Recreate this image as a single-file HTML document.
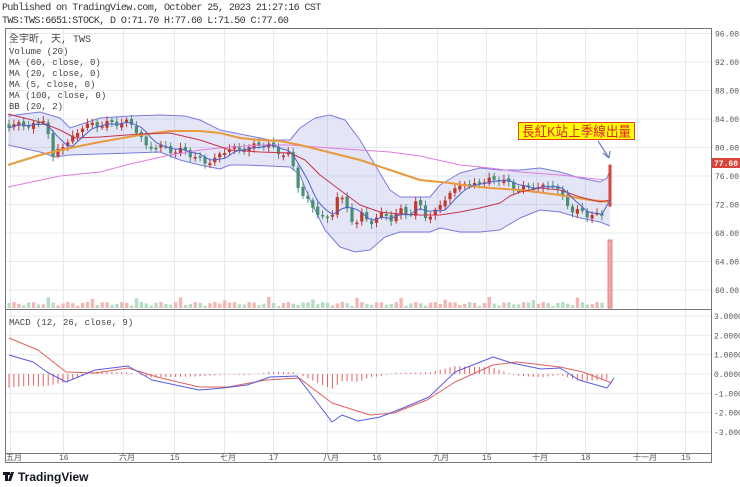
<!DOCTYPE html>
<html><head><meta charset="utf-8"><style>
body{margin:0;background:#fff;width:740px;height:487px;overflow:hidden;font-family:"Liberation Mono","Noto Sans CJK TC",monospace;}
#hdr{position:absolute;left:2px;top:2px;font-size:10px;line-height:13px;color:#333;font-family:"Liberation Mono","Noto Sans CJK SC",monospace;letter-spacing:-0.6px;}
svg{position:absolute;left:0;top:0;}
</style></head><body>
<div id="hdr">Published on TradingView.com, October 25, 2023 21:27:16 CST<br>TWS:TWS:6651:STOCK, D O:71.70 H:77.60 L:71.50 C:77.60</div>
<svg id="s" width="740" height="487" xmlns="http://www.w3.org/2000/svg" font-family="Liberation Mono, Noto Sans CJK TC, monospace">
<g id="grid" stroke="#e6eaee" stroke-width="1"></g>
<g id="g"></g>
<rect x="5.5" y="28.5" width="706" height="434" fill="none" stroke="#777"/>
<line x1="5" y1="309.5" x2="712" y2="309.5" stroke="#777"/>
<line x1="5" y1="453.5" x2="712" y2="453.5" stroke="#777"/>
<line x1="711.5" y1="28" x2="711.5" y2="463" stroke="#777"/>
<g font-size="9" fill="#444">
<text x="9" y="42" font-size="10">全宇昕, 天, TWS</text>
<text x="9" y="54">Volume (20)</text>
<text x="9" y="65">MA (60, close, 0)</text>
<text x="9" y="76">MA (20, close, 0)</text>
<text x="9" y="87">MA (5, close, 0)</text>
<text x="9" y="98">MA (100, close, 0)</text>
<text x="9" y="109">BB (20, 2)</text>
<text x="9" y="325">MACD (12, 26, close, 9)</text>
</g>
<g id="ax" font-size="8" fill="#555"></g>
<rect x="712" y="158" width="28" height="10" fill="#d9433a"/>
<text x="714" y="166" font-size="8" fill="#fff" font-weight="bold">77.60</text>
<rect x="518.5" y="122.5" width="116" height="17" fill="#ffff00" stroke="#e0402a"/>
<text x="522" y="136.5" font-size="14" fill="#e0202a" textLength="109" lengthAdjust="spacingAndGlyphs" font-family="Liberation Sans, Noto Sans CJK TC, sans-serif">長紅K站上季線出量</text>
<path d="M598 141 L609 158 M609 158 L603 153 M609 158 L610 151" stroke="#6a7fb8" stroke-width="1.2" fill="none"/>
<g transform="translate(3,470)">
<path d="M0 2h7v3h-2v6h-3v-6h-2z" fill="#131722"/><path d="M8 2h3l-3 9h-3l2-6z" fill="#131722"/>
<text x="15" y="11" font-size="12" font-weight="bold" fill="#131722" font-family="Liberation Sans, sans-serif">TradingView</text>
</g>
</svg>
<script>
var NS="http://www.w3.org/2000/svg",G=document.getElementById('g'),GR=document.getElementById('grid'),AX=document.getElementById('ax');
function el(p,t,a){var e=document.createElementNS(NS,t);for(var k in a)e.setAttribute(k,a[k]);p.appendChild(e);return e;}
function interp(pts,x){if(x<=pts[0][0])return pts[0][1];for(var i=1;i<pts.length;i++){if(x<=pts[i][0]){var a=pts[i-1],b=pts[i];return a[1]+(b[1]-a[1])*(x-a[0])/(b[0]-a[0]);}}return pts[pts.length-1][1];}
function pl(pts,c,w,f){var d=pts.map(function(p,i){return (i?'L':'M')+p[0]+' '+p[1];}).join('');return el(G,'path',{d:d,stroke:c,'stroke-width':w||1,fill:f||'none','stroke-linejoin':'round'});}
function Y(p){return 119-(p-84)*7.125;}
var tx=[[10,'五月'],[63,'16'],[123,'六月'],[174,'15'],[224,'七月'],[273,'17'],[327,'八月'],[376,'16'],[437,'九月'],[486,'15'],[536,'十月'],[585,'18'],[637,'十一月'],[685,'15']];
tx.forEach(function(t){el(GR,'line',{x1:t[0]+.5,y1:29,x2:t[0]+.5,y2:453});var e=el(AX,'text',{x:t[0]-4,y:460});e.textContent=t[1];});
for(var p=60;p<=96;p+=4){var y=Y(p);el(GR,'line',{x1:6,y1:y,x2:711,y2:y});var e=el(AX,'text',{x:715,y:y+3});e.textContent=p.toFixed(2);}
[3,2,1,0,-1,-2,-3].forEach(function(m){var y=374-19.3*m;el(GR,'line',{x1:6,y1:y,x2:711,y2:y});var e=el(AX,'text',{x:714,y:y+3});e.textContent=(m<0?'':' ')+m.toFixed(4);});
var up=[[8,116],[40,112],[60,118],[70,128],[100,118],[130,116],[160,115],[185,116],[200,120],[220,130],[235,133],[270,140],[290,140],[300,128],[315,118],[330,115],[345,120],[360,140],[375,165],[390,190],[400,197],[430,197],[440,185],[460,173],[480,168],[500,170],[520,170],[540,168],[560,172],[580,178],[600,182],[607,178],[610,170]];
var lo=[[8,145],[40,152],[55,157],[70,155],[100,154],[130,153],[160,152],[180,160],[200,165],[220,169],[230,165],[245,165],[270,166],[290,167],[300,175],[310,200],[325,230],[340,247],[355,252],[370,250],[385,237],[400,232],[430,232],[440,228],[460,232],[480,232],[500,230],[520,218],[540,210],[560,212],[580,218],[600,222],[610,226]];
pl(up.concat(lo.slice().reverse()).concat([up[0]]),'none',0,'rgba(120,130,220,0.2)');
pl(up,'#7b7be0',1);pl(lo,'#7b7be0',1);
var cl=[[8,125],[40,125],[45,115],[53,160],[60,145],[70,142],[82,126],[90,125],[100,125],[110,123],[125,123],[130,122],[140,135],[145,148],[155,146],[165,148],[175,152],[185,150],[195,158],[205,162],[215,160],[225,150],[230,148],[240,150],[255,146],[265,143],[275,150],[285,155],[290,155],[300,192],[306,200],[312,206],[320,215],[330,222],[337,195],[342,200],[350,215],[355,225],[362,215],[370,222],[378,218],[385,212],[390,220],[398,215],[402,208],[410,215],[418,200],[425,215],[432,218],[438,208],[442,200],[450,195],[455,190],[462,180],[470,188],[478,180],[485,183],[490,180],[497,178],[505,182],[510,185],[515,188],[520,190],[525,187],[540,187],[545,188],[550,185],[555,182],[560,197],[565,200],[570,208],[575,213],[580,210],[585,215],[590,214],[595,215],[600,218],[605,212]];
var prev=125,i=0,cs=[];
for(var x=9;x<=606;x+=4.9){i++;var c=interp(cl,x)+Math.sin(i*1.7)*3;var o=prev+Math.cos(i*2.1)*1.5;prev=c;cs.push([x,c]);var up1=c<o;
var col=up1?'#c0392b':'#4a8f72';var vh=2+Math.abs(Math.sin(i*2.3))*4+(i%9==0?5:0);
el(G,'rect',{x:x-1.6,y:308-vh,width:3.4,height:vh,fill:up1?'#f2b8b3':'#b7dcc6'});
var t=Math.min(o,c),b=Math.max(o,c);
el(G,'line',{x1:x,y1:t-2-Math.abs(Math.sin(i))*3,x2:x,y2:b+2+Math.abs(Math.cos(i))*3,stroke:col,'stroke-width':1});
el(G,'rect',{x:x-1.6,y:t,width:3.2,height:Math.max(1.5,b-t),fill:col});}
el(G,'rect',{x:608,y:240,width:4,height:68,fill:'#f0a8a2',stroke:'#d98880'});
el(G,'rect',{x:608.5,y:Y(77.6),width:3,height:Y(71.7)-Y(77.6),fill:'#d9433a'});
pl([[8,187],[60,176],[100,172],[130,164],[170,155],[200,150],[230,147],[260,145],[290,145],[330,148],[360,150],[390,152],[420,156],[460,165],[490,168],[520,172],[560,175],[605,180]],'#e07ce0',1);
pl([[8,165],[40,155],[70,148],[100,142],[140,135],[170,131],[200,131],[220,133],[240,138],[260,140],[280,141],[300,145],[320,150],[340,155],[360,160],[390,170],[420,180],[450,183],[470,186],[490,188],[520,190],[560,195],[590,200],[610,202]],'#e89a3c',2);
pl([[8,114],[40,122],[60,130],[75,138],[100,137],[140,134],[170,133],[200,140],[230,150],[260,152],[290,153],[305,160],[320,175],[340,190],[360,205],[380,212],[400,214],[420,215],[440,215],[460,212],[480,208],[500,203],[510,196],[520,192],[540,188],[560,190],[580,197],[600,202],[610,200]],'#c8344a',1);
var ma5=[];for(var k=0;k<cs.length;k++){var s=0,n=0;for(var j=Math.max(0,k-4);j<=k;j++){s+=cs[j][1];n++;}ma5.push([cs[k][0],s/n]);}ma5.push([610,200]);pl(ma5,'#5060d0',1);
var B=[[9,355],[33,362],[47,372],[66,382],[95,370],[128,366],[152,380],[199,390],[223,388],[247,385],[270,377],[297,376],[313,397],[332,422],[342,415],[358,421],[380,417],[403,408],[429,397],[455,372],[493,357],[512,363],[541,369],[560,368],[579,380],[607,388],[614,378]];
var R=[[9,338],[38,350],[66,372],[95,373],[128,368],[157,377],[199,387],[228,387],[266,380],[299,378],[332,403],[370,415],[394,413],[427,400],[455,382],[493,365],[517,362],[560,367],[583,372],[612,383]];
for(var x=9;x<=610;x+=4.9){var h=(interp(R,x)-interp(B,x))*0.8;el(G,'line',{x1:x,y1:374,x2:x,y2:374-h,stroke:'#e86060','stroke-width':1});}
pl(R,'#e06060',1);pl(B,'#5a5ae0',1);
</script>
</body></html>
